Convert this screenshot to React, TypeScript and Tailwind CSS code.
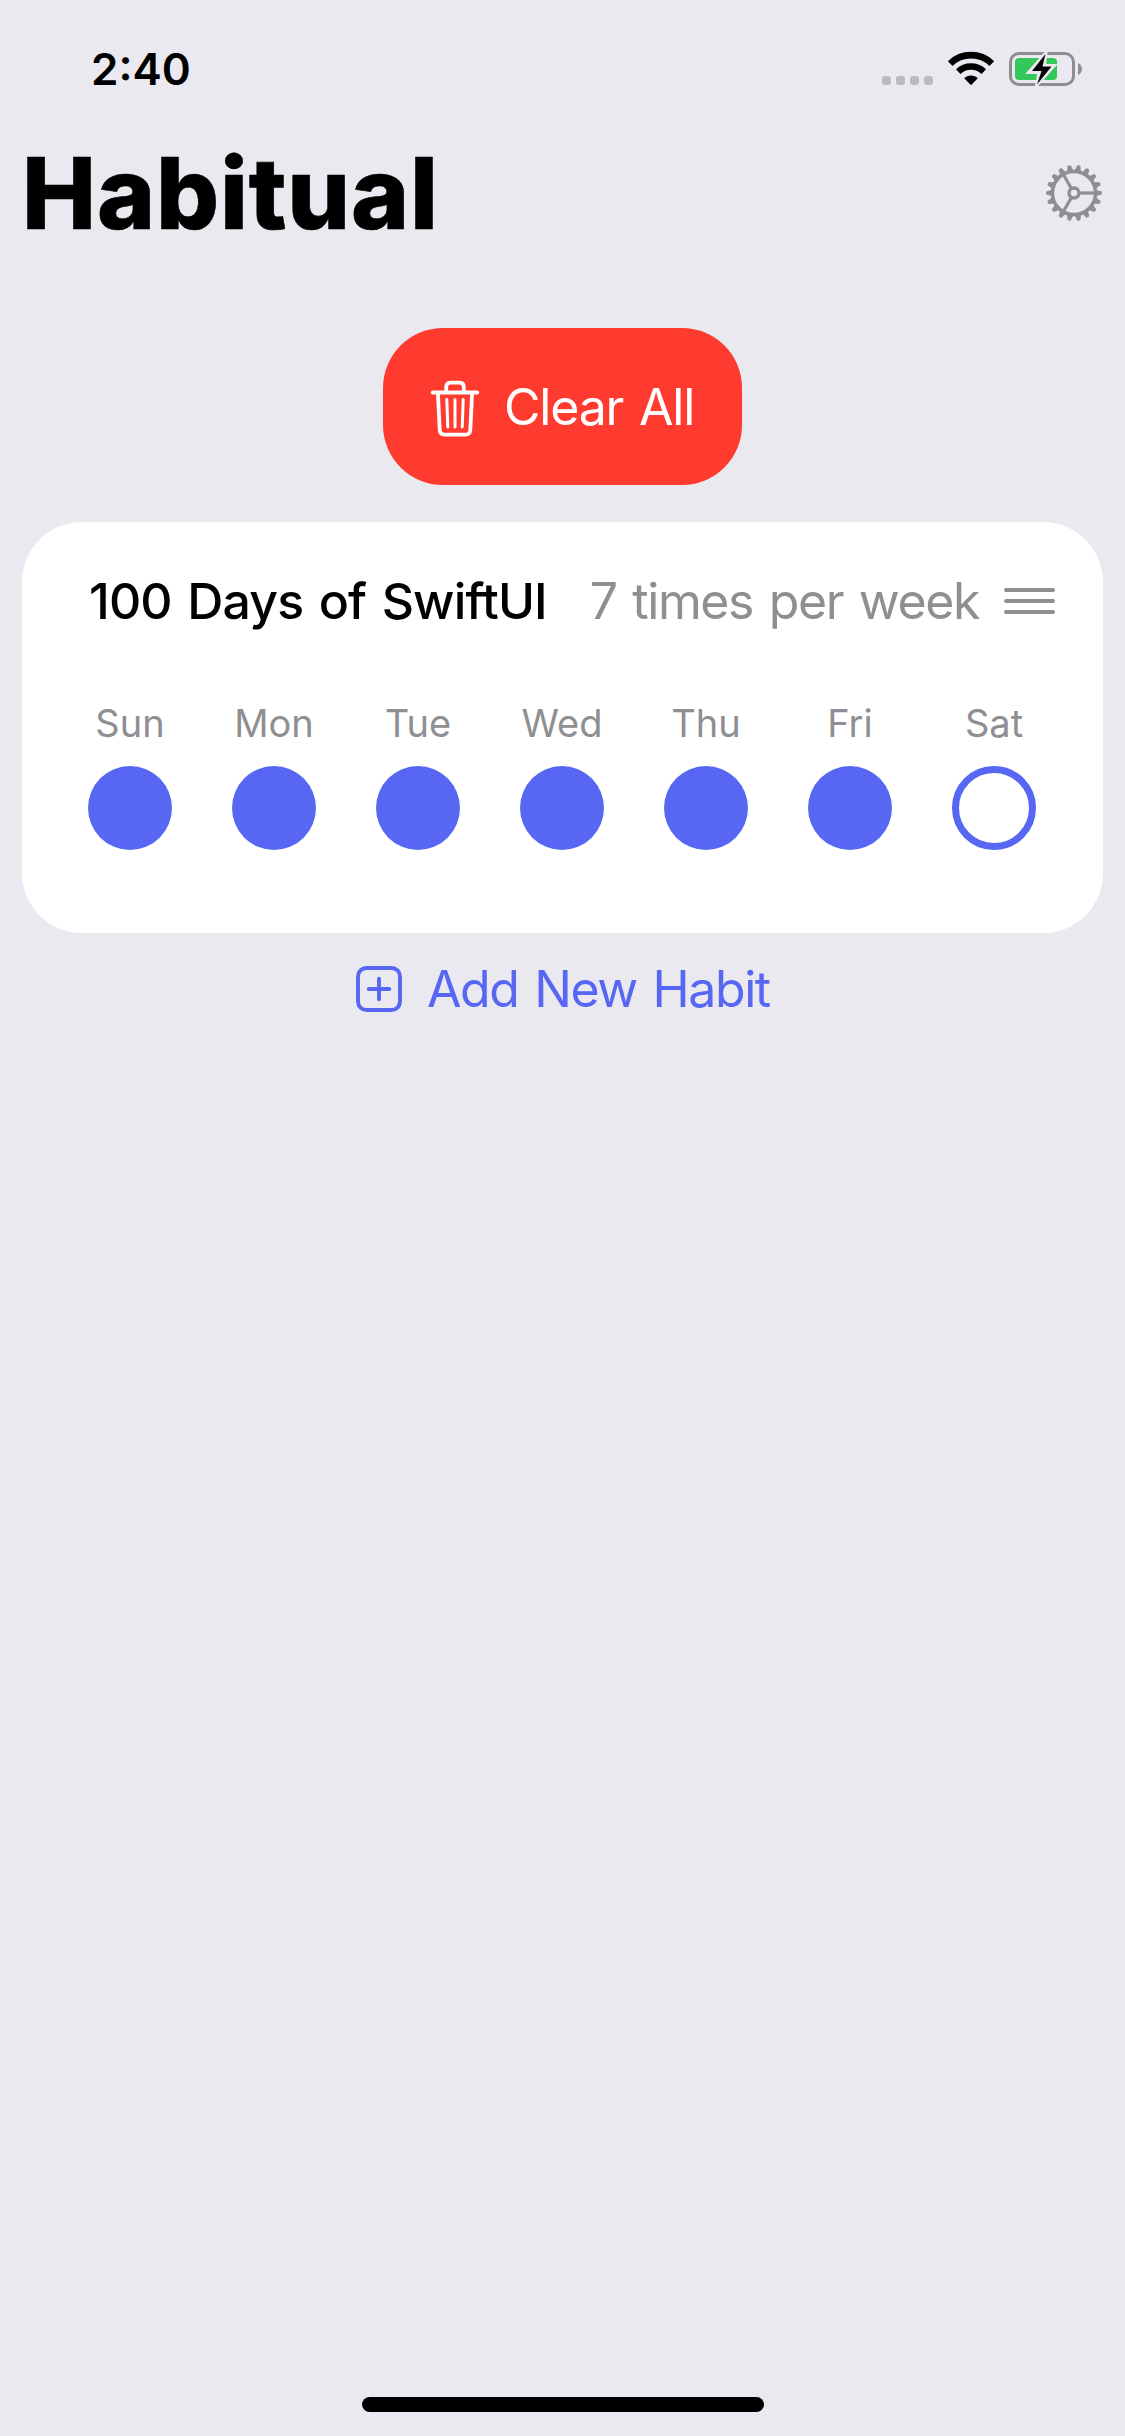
const DAYS = [
  { name: "Sun", done: true },
  { name: "Mon", done: true },
  { name: "Tue", done: true },
  { name: "Wed", done: true },
  { name: "Thu", done: true },
  { name: "Fri", done: true },
  { name: "Sat", done: false },
];

function WifiIcon() {
  return (
    <svg className="ml-[14px] h-[36px] w-[48px]" viewBox="0 0 48 36" fill="none">
      <path d="M3.2 12.6 A30 30 0 0 1 44.8 12.6" stroke="#000" strokeWidth="6.8" />
      <path d="M11.2 20.6 A18.6 18.6 0 0 1 36.8 20.6" stroke="#000" strokeWidth="6.4" />
      <path d="M17.2 27.3 C20.8 23.6 27.2 23.6 30.8 27.3 L24.7 33.6 Q24 34.3 23.3 33.6 Z" fill="#000" />
    </svg>
  );
}

function BatteryIcon() {
  return (
    <svg className="ml-[13px] h-[36px] w-[76px]" viewBox="0 0 76 36" fill="none">
      <rect x="2.5" y="2.5" width="63" height="31" rx="8.5" stroke="#8e8d93" strokeWidth="3" />
      <rect x="7" y="7" width="42" height="22" rx="4" fill="#34c759" />
      <path d="M70 12 Q74 14 74 18 Q74 22 70 24 Z" fill="#8e8d93" />
      <path d="M38 1.5 L20.5 21.5 H31 L28.5 34.5 L46.5 14.5 H36.5 Z" fill="#eae9ef" stroke="#eae9ef" strokeWidth="3" />
      <path d="M37.5 3 L24 20 H33.5 L29 33.5 L43.5 15.5 H34.5 Z" fill="#000" />
    </svg>
  );
}

function GearIcon() {
  const teeth = Array.from({ length: 18 }, (_, i) => i * 20);
  return (
    <svg className="h-[58px] w-[58px]" viewBox="-29 -29 58 58" fill="none" stroke="#8e8e93">
      <circle r="21.5" strokeWidth="3.4" />
      <circle r="5" strokeWidth="3.4" />
      {[0, 120, 240].map((a) => (
        <path key={a} d="M6 0 H21" strokeWidth="3.2" transform={`rotate(${a})`} />
      ))}
      {teeth.map((a) => (
        <path
          key={a}
          d="M22 -3.6 Q25 -2.1 27.4 -1.8 Q28.8 0 27.4 1.8 Q25 2.1 22 3.6 Z"
          fill="#8e8e93"
          stroke="none"
          transform={`rotate(${a})`}
        />
      ))}
    </svg>
  );
}

function TrashIcon() {
  return (
    <svg className="mt-[2px] h-[58px] w-[50px] shrink-0" viewBox="0 0 50 58" fill="none" stroke="#fff" strokeLinecap="round" strokeLinejoin="round">
      <path d="M2.8 13.5 H47.2" strokeWidth="3.9" />
      <path d="M16.2 13 V8 Q16.2 3.7 20.5 3.7 H29.5 Q33.8 3.7 33.8 8 V13" strokeWidth="3.8" />
      <path d="M7.9 14 L9.7 51 Q10 55.6 14.6 55.6 H35.4 Q40 55.6 40.3 51 L42.1 14" strokeWidth="3.8" />
      <path d="M16.8 20.5 L17.8 48 M25 20.5 V48 M33.2 20.5 L32.2 48" strokeWidth="3" />
    </svg>
  );
}

function PlusSquareIcon() {
  return (
    <svg className="h-[46px] w-[46px] shrink-0" viewBox="0 0 46 46" fill="none" stroke="#5767f3" strokeWidth="3.9" strokeLinecap="round">
      <rect x="2" y="2" width="42" height="42" rx="8.5" />
      <path d="M23 12.7 V33.3 M12.7 23 H33.3" />
    </svg>
  );
}

export default function App() {
  return (
    <div className="flex h-[2436px] w-[1125px] flex-col overflow-hidden bg-[#eae9ef] font-['Inter',sans-serif] text-black">
      <header className="flex h-[136px] items-center pt-[2px] pr-[41px] pl-[91px]">
        <span className="text-[44px] leading-none font-semibold">2:40</span>
        <div className="ml-auto flex items-center">
          <div className="mt-[23px] flex gap-[5px]">
            {[0, 1, 2, 3].map((i) => (
              <span key={i} className="size-[9px] rounded-[3px] bg-[#bbbac0]" />
            ))}
          </div>
          <WifiIcon />
          <BatteryIcon />
        </div>
      </header>

      <div className="flex h-[114px] items-center justify-between pr-[22px] pl-[22px]">
        <h1 className="text-[99px] leading-none font-extrabold tracking-[0.8px] [-webkit-text-stroke:0.6px_black]">Habitual</h1>
        <button className="flex">
          <GearIcon />
        </button>
      </div>

      <button className="mt-[78px] flex h-[157px] w-[359px] items-center self-center rounded-[60px] bg-[#ff3b30] pl-[47px]">
        <TrashIcon />
        <span className="ml-[24px] text-[50px] leading-none tracking-[-1.2px] [word-spacing:3px] whitespace-nowrap text-white">Clear All</span>
      </button>

      <section className="mx-[22px] mt-[37px] flex h-[411px] flex-col rounded-[60px] bg-white">
        <div className="mt-[49px] flex h-[60px] items-center pr-[48px] pl-[67px]">
          <h2 className="text-[50px] leading-none font-medium tracking-[-0.85px] [word-spacing:3px] whitespace-nowrap">100 Days of SwiftUI</h2>
          <span className="ml-auto text-[50px] leading-none tracking-[-1.4px] [word-spacing:3px] whitespace-nowrap text-[#8e8e93]">7 times per week</span>
          <div className="ml-[25px] flex w-[51px] flex-col gap-[7px]">
            <span className="h-[4px] rounded-full bg-[#8e8e93]" />
            <span className="h-[4px] rounded-full bg-[#8e8e93]" />
            <span className="h-[4px] rounded-full bg-[#8e8e93]" />
          </div>
        </div>
        <div className="mt-[72px] flex px-[36px]">
          {DAYS.map((day) => (
            <div key={day.name} className="flex w-[144px] flex-col items-center">
              <span className="text-[38px] leading-[40px] text-[#8e8e93]">{day.name}</span>
              <span
                className={
                  day.done
                    ? "mt-[23px] size-[84px] rounded-full bg-[#5767f3]"
                    : "mt-[23px] size-[84px] rounded-full border-[7px] border-[#5767f3]"
                }
              />
            </div>
          ))}
        </div>
      </section>

      <button className="mt-[27px] flex h-[58px] items-center self-start pl-[356px] text-[#5767f3]">
        <PlusSquareIcon />
        <span className="ml-[25px] text-[50px] leading-none tracking-[-1.4px] [word-spacing:3px] whitespace-nowrap">Add New Habit</span>
      </button>

      <div className="mt-auto mb-[24px] ml-[362px] h-[15px] w-[402px] rounded-full bg-black" />
    </div>
  );
}
